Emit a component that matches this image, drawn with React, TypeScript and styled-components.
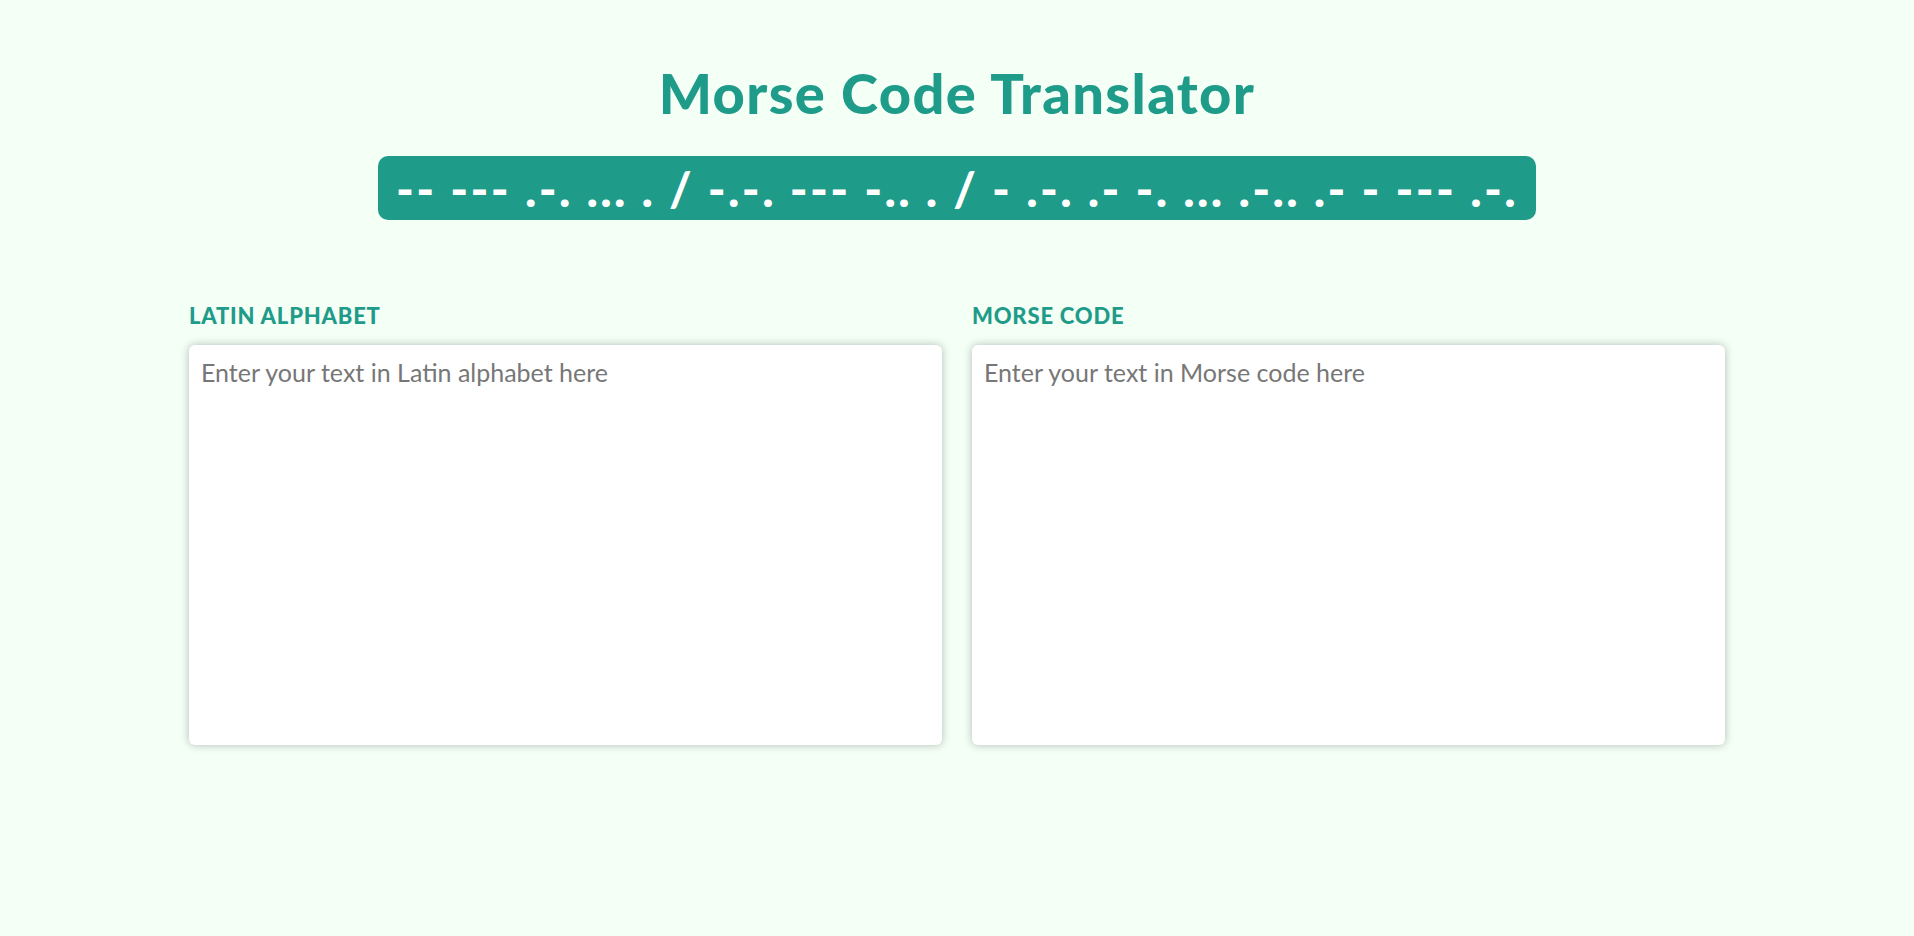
import React, { useState } from "react";
import styled, { createGlobalStyle } from "styled-components";

const teal = "#1f9b89";

const GlobalStyle = createGlobalStyle`
  html, body {
    margin: 0;
    padding: 0;
    background: #f4fff6;
    font-family: "Lato", "Open Sans", sans-serif;
  }
  * { box-sizing: border-box; }
`;

const Page = styled.div`
  min-height: 936px;
  background: #f4fff6;
  padding-top: 60px;
  display: flex;
  flex-direction: column;
  align-items: center;
`;

const Title = styled.h1`
  margin: 0;
  font-family: "Lato", sans-serif;
  font-weight: 900;
  font-size: 56px;
  line-height: 66px;
  letter-spacing: 1.4px;
  color: ${teal};
`;

const Banner = styled.div`
  margin-top: 30px;
  background: ${teal};
  color: #ffffff;
  border-radius: 10px;
  height: 64px;
  padding: 0 18px;
  display: flex;
  align-items: center;
  font-family: "Lato", sans-serif;
  font-weight: 900;
  font-size: 48px;
  letter-spacing: 2.35px;
  white-space: pre;
`;

const Panels = styled.div`
  margin-top: 84px;
  width: 1536px;
  display: grid;
  grid-template-columns: 1fr 1fr;
  gap: 30px;
`;

const Column = styled.div`
  display: flex;
  flex-direction: column;
`;

const Label = styled.label`
  font-family: "Lato", sans-serif;
  font-weight: 900;
  font-size: 22px;
  line-height: 24px;
  letter-spacing: 0.8px;
  color: ${teal};
  text-transform: uppercase;
  margin-bottom: 17px;
`;

const TextArea = styled.textarea`
  height: 400px;
  width: 100%;
  resize: none;
  border: none;
  outline: none;
  border-radius: 6px;
  background: #ffffff;
  box-shadow: 0 0 9px rgba(50, 70, 60, 0.35);
  padding: 12px 12px;
  font-family: "Lato", sans-serif;
  font-size: 25px;
  line-height: 30px;
  color: #333;
  &::placeholder {
    color: #777;
  }
`;

const MORSE: Record<string, string> = {
  a: ".-", b: "-...", c: "-.-.", d: "-..", e: ".", f: "..-.", g: "--.", h: "....",
  i: "..", j: ".---", k: "-.-", l: ".-..", m: "--", n: "-.", o: "---", p: ".--.",
  q: "--.-", r: ".-.", s: "...", t: "-", u: "..-", v: "...-", w: ".--", x: "-..-",
  y: "-.--", z: "--..", "0": "-----", "1": ".----", "2": "..---", "3": "...--",
  "4": "....-", "5": ".....", "6": "-....", "7": "--...", "8": "---..", "9": "----.",
};
const REVERSE: Record<string, string> = Object.fromEntries(
  Object.entries(MORSE).map(([k, v]) => [v, k])
);

const toMorse = (s: string) =>
  s
    .toLowerCase()
    .split(" ")
    .map((w) => w.split("").map((c) => MORSE[c] ?? "").filter(Boolean).join(" "))
    .join(" / ");

const fromMorse = (s: string) =>
  s
    .trim()
    .split("/")
    .map((w) => w.trim().split(/\s+/).map((c) => REVERSE[c] ?? "").join(""))
    .join(" ");

export default function App() {
  const [latin, setLatin] = useState("");
  const [morse, setMorse] = useState("");
  return (
    <>
      <GlobalStyle />
      <Page>
        <Title>Morse Code Translator</Title>
        <Banner>-- --- .-. ... . / -.-. --- -.. . / - .-. .- -. ... .-.. .- - --- .-.</Banner>
        <Panels>
          <Column>
            <Label htmlFor="latin">Latin alphabet</Label>
            <TextArea
              id="latin"
              placeholder="Enter your text in Latin alphabet here"
              value={latin}
              onChange={(e) => {
                setLatin(e.target.value);
                setMorse(toMorse(e.target.value));
              }}
            />
          </Column>
          <Column>
            <Label htmlFor="morse">Morse code</Label>
            <TextArea
              id="morse"
              placeholder="Enter your text in Morse code here"
              value={morse}
              onChange={(e) => {
                setMorse(e.target.value);
                setLatin(fromMorse(e.target.value));
              }}
            />
          </Column>
        </Panels>
      </Page>
    </>
  );
}
